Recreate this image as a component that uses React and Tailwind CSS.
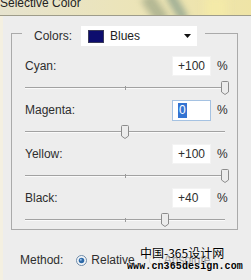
import React from "react";

const rows = [
  { name: "Cyan", value: 100 },
  { name: "Magenta", value: 0, focused: true },
  { name: "Yellow", value: 100 },
  { name: "Black", value: 40 },
];

const Thumb = () => (
  <svg width="8" height="14" viewBox="0 0 8 14">
    <path
      d="M1.5 0.5 H6.5 Q7.5 0.5 7.5 1.5 V11 L4 13.5 L0.5 11 V1.5 Q0.5 0.5 1.5 0.5 Z"
      fill="#ececec"
      stroke="#8c8c8c"
    />
  </svg>
);

const Slider = ({ value }) => {
  return (
    <div className="relative w-[200px] h-[24px] pt-[11px]">
      <div className="h-[1px] bg-[#a2a2a2]" />
      <div className="h-[1px] bg-[#fafafa]" />
      <div className="absolute left-[100px] top-[10px] w-[1px] h-[4px] bg-[#9a9a9a]" />
      <div
        className="absolute top-[5px]"
        style={{ left: 100 + value * 1 - 4 }}
      >
        <Thumb />
      </div>
    </div>
  );
};

const Row = ({ name, value, focused }) => {
  const text = value > 0 ? `+${value}` : `${value}`;
  return (
    <div>
      <div className="flex items-center h-[20px]">
        <p className="w-[147px]">{name}:</p>
        {focused ? (
          <div className="w-[39px] h-[21px] bg-white border border-[#a5c2e2] flex items-center pl-[5px]">
            <span className="bg-[#3474d2] text-white leading-[15px] px-[1px]">
              {text}
            </span>
          </div>
        ) : (
          <div className="w-[39px] h-[20px] bg-white border border-[#f3f3f3] flex items-center pl-[5px]">
            {text}
          </div>
        )}
        <p className="ml-[6px]">%</p>
      </div>
      <Slider value={value} />
    </div>
  );
};

const Radio = ({ checked }) => (
  <svg width="11" height="11" viewBox="0 0 11 11">
    <circle cx="5.5" cy="5.5" r="5" fill="#f4f6f8" stroke={checked ? "#6d8aa8" : "#c8c8c8"} />
    {checked && <circle cx="5.5" cy="5.5" r="2.8" fill="#2e6aa8" />}
    {checked && <circle cx="4.8" cy="4.8" r="1" fill="#9cc4ec" />}
  </svg>
);

export default function App() {
  return (
    <div className="w-[251px] h-[280px] overflow-hidden bg-[#ededed] flex flex-col font-['Liberation_Sans',Arial,sans-serif] text-[12px] text-[#2e2e2e]">
      <div className="relative h-[16px] overflow-hidden border-b border-[#9e9c8a] bg-[linear-gradient(90deg,#e6e3cf,#ebe4bb_45%,#efe4a6)]">
        <div className="absolute left-[148px] top-[-6px] w-[14px] h-[30px] rotate-[-35deg] bg-[#a6ad8c] blur-[3px] opacity-80" />
        <div className="absolute left-[172px] top-[-8px] w-[10px] h-[30px] rotate-[-30deg] bg-[#8fa38f] blur-[3px] opacity-80" />
        <div className="absolute left-[205px] top-[-4px] w-[22px] h-[26px] bg-[#f4eaa8] blur-[4px]" />
        <p className="relative -mt-[3px] text-[12px] leading-[13px] text-[#222]">
          Selective Color
        </p>
      </div>

      <div className="flex flex-1">
        <div className="w-[3px] bg-[#f4f0e1]" />
        <div className="relative flex-1">
          <div className="ml-[8px] mt-[17px] w-[227px] h-[197px] border border-[#aaaaaa] flex flex-col">
            <div className="-mt-[8px] ml-[10px] self-start flex items-center h-[20px] bg-[#ededed] pl-[12px] pr-[8px]">
              <p>Colors:</p>
              <div className="ml-[9px] w-[116px] h-[20px] bg-white flex items-center pl-[7px] pr-[6px]">
                <div className="w-[16px] h-[13px] bg-[#0d0d6e] border border-[#3a3a5a]" />
                <p className="ml-[6px] text-[#222]">Blues</p>
                <svg className="ml-auto" width="7" height="4" viewBox="0 0 7 4">
                  <path d="M0 0 H7 L3.5 4 Z" fill="#111" />
                </svg>
              </div>
            </div>
            <div className="mt-[10px] pl-[13px]">
              {rows.map((r) => (
                <Row key={r.name} {...r} />
              ))}
            </div>
          </div>

          <div className="mt-[23px] pl-[17px] flex items-center h-[14px]">
            <p>Method:</p>
            <div className="ml-[13px]">
              <Radio checked />
            </div>
            <p className="ml-[4px]">Relative</p>
            <div className="ml-[14px] opacity-60">
              <Radio />
            </div>
            <p className="ml-[4px] text-[#9a9a9a]">Absolute</p>
          </div>

          <p className="absolute left-[137px] top-[230px] text-[12px] leading-[14px] text-black font-['Noto_Sans_CJK_SC',sans-serif] [text-shadow:0_0_2px_#fff]">
            中国-365设计网
          </p>
          <p className="absolute left-[124px] top-[245px] text-[10px] leading-[12px] tracking-[0.1px] font-bold text-black font-['Liberation_Mono',monospace] [text-shadow:0_0_2px_#fff]">
            www.cn365design.com
          </p>
        </div>
      </div>
    </div>
  );
}
